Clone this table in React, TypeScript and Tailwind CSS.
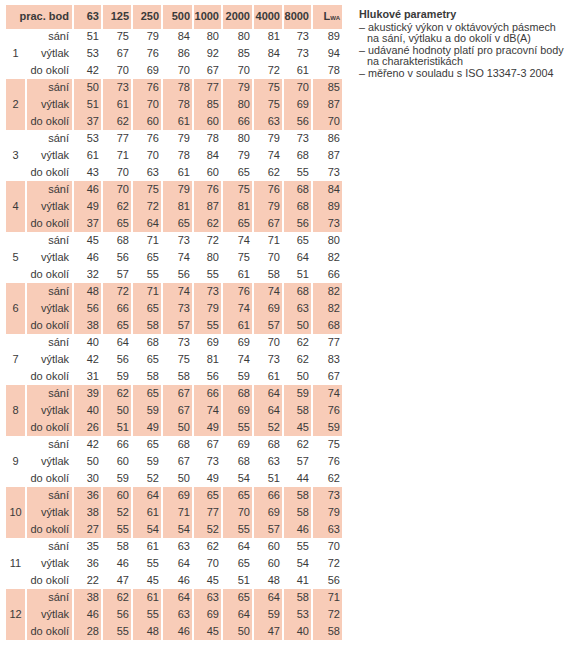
const cols = 'grid grid-cols-[19px_45px_27px_28px_28px_29px_27px_29px_28px_27px_29px] gap-x-[2px]';

const freqs = ['63', '125', '250', '500', '1000', '2000', '4000', '8000'];
const labels = ['sání', 'výtlak', 'do okolí'];

const data: number[][][] = [
  [[51, 75, 79, 84, 80, 80, 81, 73, 89], [53, 67, 76, 86, 92, 85, 84, 73, 94], [42, 70, 69, 70, 67, 70, 72, 61, 78]],
  [[50, 73, 76, 78, 77, 79, 75, 70, 85], [51, 61, 70, 78, 85, 80, 75, 69, 87], [37, 62, 60, 61, 60, 66, 63, 56, 70]],
  [[53, 77, 76, 79, 78, 80, 79, 73, 86], [61, 71, 70, 78, 84, 79, 74, 68, 87], [43, 70, 63, 61, 60, 65, 62, 55, 73]],
  [[46, 70, 75, 79, 76, 75, 76, 68, 84], [49, 62, 72, 81, 87, 81, 79, 68, 89], [37, 65, 64, 65, 62, 65, 67, 56, 73]],
  [[45, 68, 71, 73, 72, 74, 71, 65, 80], [46, 56, 65, 74, 80, 75, 70, 64, 82], [32, 57, 55, 56, 55, 61, 58, 51, 66]],
  [[48, 72, 71, 74, 73, 76, 74, 68, 82], [56, 66, 65, 73, 79, 74, 69, 63, 82], [38, 65, 58, 57, 55, 61, 57, 50, 68]],
  [[40, 64, 68, 73, 69, 69, 70, 62, 77], [42, 56, 65, 75, 81, 74, 73, 62, 83], [31, 59, 58, 58, 56, 59, 61, 50, 67]],
  [[39, 62, 65, 67, 66, 68, 64, 59, 74], [40, 50, 59, 67, 74, 69, 64, 58, 76], [26, 51, 49, 50, 49, 55, 52, 45, 59]],
  [[42, 66, 65, 68, 67, 69, 68, 62, 75], [50, 60, 59, 67, 73, 68, 63, 57, 76], [30, 59, 52, 50, 49, 54, 51, 44, 62]],
  [[36, 60, 64, 69, 65, 65, 66, 58, 73], [38, 52, 61, 71, 77, 70, 69, 58, 79], [27, 55, 54, 54, 52, 55, 57, 46, 63]],
  [[35, 58, 61, 63, 62, 64, 60, 55, 70], [36, 46, 55, 64, 70, 65, 60, 54, 72], [22, 47, 45, 46, 45, 51, 48, 41, 56]],
  [[38, 62, 61, 64, 63, 65, 64, 58, 71], [46, 56, 55, 63, 69, 64, 59, 53, 72], [28, 55, 48, 46, 45, 50, 47, 40, 58]],
];

function Group({ n, rows }: { n: number; rows: number[][] }) {
  const shaded = n % 2 === 0;
  const bg = shaded ? 'bg-[#f8ccb8]' : '';
  return (
    <div className={`${cols} grid-rows-[17px_17px_17px]`}>
      <div className={`row-span-3 flex items-center justify-center ${bg}`}>{n}</div>
      {rows.map((r, i) => (
        <div key={i} className="contents">
          <div className={`text-right pr-[3px] ${bg}`} style={{ gridRow: i + 1, gridColumn: 2 }}>
            {labels[i]}
          </div>
          {r.map((v, j) => (
            <div key={j} className={`text-right pr-[2px] ${bg}`} style={{ gridRow: i + 1, gridColumn: j + 3 }}>
              {v}
            </div>
          ))}
        </div>
      ))}
    </div>
  );
}

export default function App() {
  return (
    <div className="w-[574px] h-[648px] bg-white flex text-[#3a3a3a] font-['Liberation_Sans',Arial,sans-serif]">
      <div className="ml-[6px] mt-[5px] w-[336px] text-[11px] leading-[17px]">
        <div className={`${cols} h-[22px] mb-[1px] font-bold`}>
          <div className="col-span-2 bg-[#f8ccb8] text-right pr-[3px] leading-[22px]">prac. bod</div>
          {freqs.map((f) => (
            <div key={f} className="bg-[#f8ccb8] text-right pr-[2px] leading-[22px]">{f}</div>
          ))}
          <div className="bg-[#f8ccb8] text-right pr-[2px] leading-[22px]">
            L<span className="text-[6px] align-baseline">WA</span>
          </div>
        </div>
        {data.map((rows, i) => (
          <Group key={i} n={i + 1} rows={rows} />
        ))}
      </div>
      <div className="ml-[17px] mt-[9px] text-[10.8px] leading-[11.4px]">
        <div className="font-bold text-[10.8px] mb-[1.5px]">Hlukové parametry</div>
        <ul>
          <li className="pl-[8px] -indent-[8px]">– akustický výkon v oktávových pásmech<br />na sání, výtlaku a do okolí v dB(A)</li>
          <li className="pl-[8px] -indent-[8px]">– udávané hodnoty platí pro pracovní body<br />na charakteristikách</li>
          <li className="pl-[8px] -indent-[8px]">– měřeno v souladu s ISO 13347-3 2004</li>
        </ul>
      </div>
    </div>
  );
}
